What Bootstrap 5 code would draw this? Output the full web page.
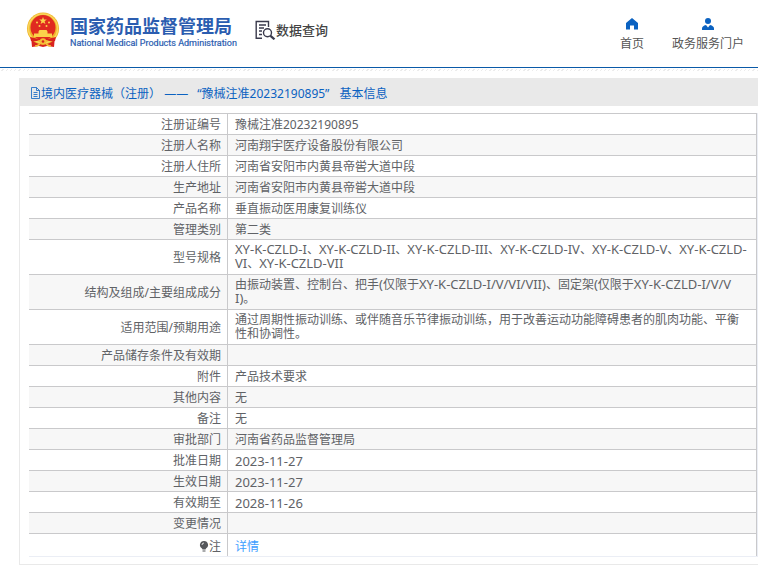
<!DOCTYPE html>
<html lang="zh-CN">
<head>
<meta charset="utf-8">
<meta name="viewport" content="width=device-width, initial-scale=1">
<title>国家药品监督管理局 - 数据查询</title>
<link href="https://cdn.jsdelivr.net/npm/bootstrap@5.3.0/dist/css/bootstrap.min.css" rel="stylesheet">
<style>
body{font-family:"Noto Sans","Noto Sans CJK SC",sans-serif;font-size:12px;line-height:14px;color:#606266;background:#fff}
.site-header{height:68px;border-bottom:1px solid #0a5aa8;padding:0 14px 7px 26px}
.stitch{height:10px;background:repeating-linear-gradient(135deg,#fff 0 2px,#ececec 2px 3px) 0 1px/100% 2px no-repeat}
.brand,.brand:hover{color:#2b5db0;gap:10px}
.brand-text{padding-top:4px}
.brand-cn{font-family:"Noto Sans CJK SC",sans-serif;font-size:18px;line-height:20px;font-weight:700}
.brand-en{font-family:Roboto,sans-serif;font-size:9px;line-height:12px;font-weight:400;-webkit-text-stroke:.2px #2b5db0;margin-top:2px}
.query{font-family:"Noto Sans CJK SC",sans-serif;font-size:13px;line-height:20px;font-weight:500;color:#444;margin-left:18px}
.top-nav{gap:28px}
.top-nav a{color:#555;gap:7px;padding-top:8px}
.panel{margin-left:19px;border:1px solid #e9e9e9;border-width:0 0 1px 1px;padding-bottom:7px}
.panel-title{height:28px;background:#e9e9e9;color:#0b62c1;font-size:12px;line-height:14px;padding:2px 0 0 10px;white-space:pre}
.paren{font-family:"Noto Sans CJK TC",sans-serif}
.cert-no{padding:0 7px 0 6px}
.table-box{margin:7px 0 0 9px;border:1px solid #ebeef5;border-width:0 1px 1px 0}
.info{width:100%;table-layout:fixed;border-collapse:separate;border-spacing:0;border-right:1px solid #c9c9cb}
.info th,.info td{border-top:1px solid #c9c9cb;padding:4px 6px 2px;height:21px;vertical-align:middle;word-break:break-all}
.info td{padding-left:7px}
.info th{width:199px;font-weight:400;text-align:right;border-right:1px solid #c9c9cb}
.info .models{word-break:normal}
.latin{font-size:13px;line-height:12px}
.info .wrapped{padding:3px 6px 3px 7px}
.info tr:nth-child(even){background:#f7f7f7}
.info tr:last-child>*{height:23px;padding-top:6px}
.info a{color:#409eff}
svg{display:block;flex:none}
.info svg{display:inline-block;vertical-align:-1px}
</style>
</head>
<body>
<header class="site-header d-flex align-items-center">
  <a href="#" class="brand d-flex align-items-center text-decoration-none">
    <svg width="34" height="36" viewBox="0 0 34 36" aria-hidden="true">
      <path d="M5 24h24l-1 11-7-1-4 1-4-1-7 1z" fill="#d9231d"/>
      <circle cx="17" cy="16.500" r="16" fill="#f0b429"/>
      <circle cx="17" cy="16.500" r="14.500" fill="none" stroke="#f9d65c" stroke-width="1.500"/>
      <circle cx="17" cy="15.500" r="12.500" fill="#e02a20"/>
      <path d="M17 5l1 2.500 2.800.1-2.200 1.700.8 2.700-2.400-1.600-2.400 1.600.8-2.700-2.200-1.700 2.800-.1z" fill="#fbd24a"/>
      <g fill="#fbd24a"><circle cx="11" cy="10.500" r="1"/><circle cx="23" cy="10.500" r="1"/><circle cx="13.500" cy="14" r="1"/><circle cx="20.500" cy="14" r="1"/>
      <path d="M12.500 19.500l1-1.500h7l1 1.500v2h4.500v3.500h-18v-3.500h4.500z"/></g>
      <path d="M4 25q13 4 26 0l-1 4q-5 1-8-1h-8q-3 2-8 1z" fill="#d9231d"/>
      <circle cx="17" cy="29.500" r="3.200" fill="#f5bd35"/><circle cx="17" cy="29.500" r="1.300" fill="#d9231d"/>
      <path d="M9 34q4 0 5-3M25 34q-4 0-5-3" stroke="#f5bd35" stroke-width="1.500" fill="none"/>
    </svg>
    <span class="brand-text d-flex flex-column">
      <span class="brand-cn">国家药品监督管理局</span>
      <span class="brand-en">National Medical Products Administration</span>
    </span>
  </a>
  <div class="query d-flex align-items-center">
    <svg width="21" height="20" viewBox="0 0 21 20" fill="none" stroke="#3a3a4c" stroke-width="1.400" aria-hidden="true">
      <path d="M7 18.300H1.200V1.500H13.500V7M4 5h7M4 8h5M4 11h3M4 14.500h3"/>
      <circle cx="12.500" cy="12.800" r="4"/><path d="M15.500 15.800l4 3.500" stroke-width="2.200"/>
    </svg>
    <span>数据查询</span>
  </div>
  <nav class="top-nav d-flex ms-auto" aria-label="主导航">
    <a href="#" class="d-flex flex-column align-items-center text-decoration-none">
      <svg width="12" height="12" viewBox="0 0 12 12" fill="#0b62c1" aria-hidden="true"><path d="M6 0l6 5v6.500H8V7.500H4v4H0V5z"/></svg>
      首页
    </a>
    <a href="#" class="d-flex flex-column align-items-center text-decoration-none">
      <svg width="12" height="12" viewBox="0 0 12 12" fill="#0b62c1" aria-hidden="true"><circle cx="6" cy="3" r="3"/><path d="M0 12V10.500Q0 8 4 7L6 9.500 8 7q4 1 4 3.500V12z"/></svg>
      政务服务门户
    </a>
  </nav>
</header>
<div class="stitch"></div>
<main class="panel">
  <h1 class="panel-title d-flex align-items-center mb-0 fw-normal"><svg width="11" height="12" viewBox="0 0 11 12" fill="none" stroke="#0b62c1" stroke-width=".8" aria-hidden="true"><path d="M1.500.500h5l3 3v8h-8zM6.500.500v3h3M3.500 5.500h4M3.500 7.500h4M3.500 9.500h4"/></svg><span>境内医疗器械<span class="paren" lang="zh-TW">（</span>注册<span class="paren" lang="zh-TW">）</span> ——<span class="cert-no"> “豫械注准20232190895” </span>基本信息</span></h1>
  <div class="table-box">
    <table class="info">
      <tbody>
        <tr><th scope="row">注册证编号</th><td>豫械注准20232190895</td></tr>
        <tr><th scope="row">注册人名称</th><td>河南翔宇医疗设备股份有限公司</td></tr>
        <tr><th scope="row">注册人住所</th><td>河南省安阳市内黄县帝喾大道中段</td></tr>
        <tr><th scope="row">生产地址</th><td>河南省安阳市内黄县帝喾大道中段</td></tr>
        <tr><th scope="row">产品名称</th><td>垂直振动医用康复训练仪</td></tr>
        <tr><th scope="row">管理类别</th><td>第二类</td></tr>
        <tr><th scope="row">型号规格</th><td class="models wrapped"><span class="latin">XY-K-CZLD-I</span>、<span class="latin">XY-K-CZLD-II</span>、<span class="latin">XY-K-CZLD-III</span>、<span class="latin">XY-K-CZLD-IV</span>、<span class="latin">XY-K-CZLD-V</span>、<span class="latin">XY-K-CZLD-VI</span>、<span class="latin">XY-K-CZLD-VII</span></td></tr>
        <tr><th scope="row">结构及组成/主要组成成分</th><td class="wrapped">由振动装置、控制台、把手<span class="latin">(</span>仅限于<span class="latin">XY-K-CZLD-I/V/VI/VII)</span>、固定架<span class="latin">(</span>仅限于<span class="latin">XY-K-CZLD-I/V/VI)</span>。</td></tr>
        <tr><th scope="row">适用范围/预期用途</th><td class="wrapped">通过周期性振动训练、或伴随音乐节律振动训练，用于改善运动功能障碍患者的肌肉功能、平衡性和协调性。</td></tr>
        <tr><th scope="row">产品储存条件及有效期</th><td></td></tr>
        <tr><th scope="row">附件</th><td>产品技术要求</td></tr>
        <tr><th scope="row">其他内容</th><td>无</td></tr>
        <tr><th scope="row">备注</th><td>无</td></tr>
        <tr><th scope="row">审批部门</th><td>河南省药品监督管理局</td></tr>
        <tr><th scope="row">批准日期</th><td class="latin">2023-11-27</td></tr>
        <tr><th scope="row">生效日期</th><td class="latin">2023-11-27</td></tr>
        <tr><th scope="row">有效期至</th><td class="latin">2028-11-26</td></tr>
        <tr><th scope="row">变更情况</th><td></td></tr>
        <tr><th scope="row"><svg width="10" height="11" viewBox="0 0 10 11" fill="#55575b" aria-hidden="true"><path d="M5 0a4 4 0 0 1 2 7.500L6.500 8.500h-3L3 7.500A4 4 0 0 1 5 0zM3.500 9.500h3v1h-3z"/><path d="M3 4q0-2 2-2" stroke="#fff" stroke-width=".8" fill="none"/></svg>注</th><td><a href="#" class="text-decoration-none">详情</a></td></tr>
      </tbody>
    </table>
  </div>
</main>
<script src="https://cdn.jsdelivr.net/npm/bootstrap@5.3.0/dist/js/bootstrap.bundle.min.js"></script>
</body>
</html>
